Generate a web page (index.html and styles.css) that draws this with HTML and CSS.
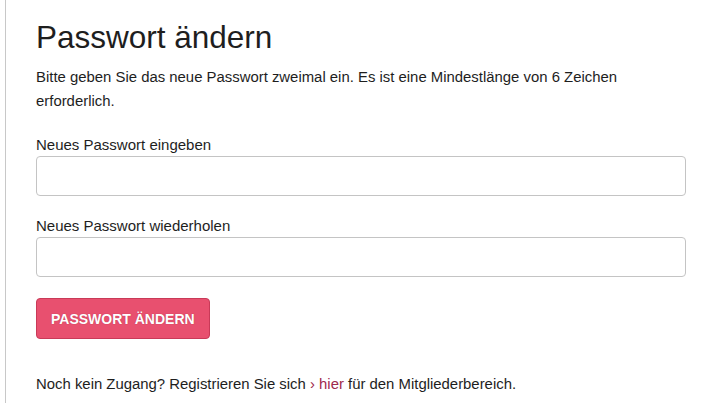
FILE: index.html
```html
<!DOCTYPE html>
<html lang="de">
<head>
  <meta charset="UTF-8">
  <title>Passwort ändern</title>
  <link rel="stylesheet" href="styles.css">
</head>
<body>
  <div class="page">
    <h1>Passwort ändern</h1>
    <p class="intro">Bitte geben Sie das neue Passwort zweimal ein. Es ist eine Mindestlänge von 6 Zeichen erforderlich.</p>

    <form class="pw-form">
      <label for="pw1">Neues Passwort eingeben</label>
      <input type="password" id="pw1" name="pw1">

      <label for="pw2">Neues Passwort wiederholen</label>
      <input type="password" id="pw2" name="pw2">

      <button type="submit">Passwort ändern</button>
    </form>

    <p class="register">Noch kein Zugang? Registrieren Sie sich <a href="#">› hier</a> für den Mitgliederbereich.</p>
  </div>
</body>
</html>
```

FILE: styles.css
```css
body {
  margin: 0;
  background: #fff;
  font-family: Arial, "Liberation Sans", sans-serif;
  color: #1e1e1e;
}
.page {
  margin-left: 5px;
  border-left: 1px solid #c8c8c8;
  padding: 18px 0 0 30px;
  min-height: 403px;
  box-sizing: border-box;
  width: 681px;
}
h1 {
  font-size: 31.5px;
  font-weight: normal;
  margin: 0 0 9px;
  line-height: 38px;
}
.intro {
  font-size: 14.9px;
  line-height: 24px;
  margin: 0 0 22px;
}
.pw-form {
  display: flex;
  flex-direction: column;
  align-items: flex-start;
}
label {
  font-size: 15px;
  line-height: 20px;
  margin-bottom: 1px;
}
input[type="password"] {
  width: 100%;
  height: 40px;
  box-sizing: border-box;
  border: 1px solid #c4c4c4;
  border-radius: 4px;
  margin: 0 0 20px;
  padding: 6px 10px;
  font-size: 15px;
}
button {
  background: #e8506f;
  color: #fff;
  border: 1px solid #c93a58;
  border-radius: 4px;
  font-family: Arial, "Liberation Sans", sans-serif;
  font-size: 14px;
  font-weight: bold;
  text-transform: uppercase;
  text-shadow: 0 0 1px rgba(120, 20, 40, 0.5);
  height: 41px;
  padding: 0 14px;
  margin-top: 1px;
  cursor: pointer;
}
.register {
  font-size: 14.9px;
  line-height: 20px;
  margin: 35px 0 0;
}
.register a {
  color: #a0294d;
  text-decoration: none;
}
```
